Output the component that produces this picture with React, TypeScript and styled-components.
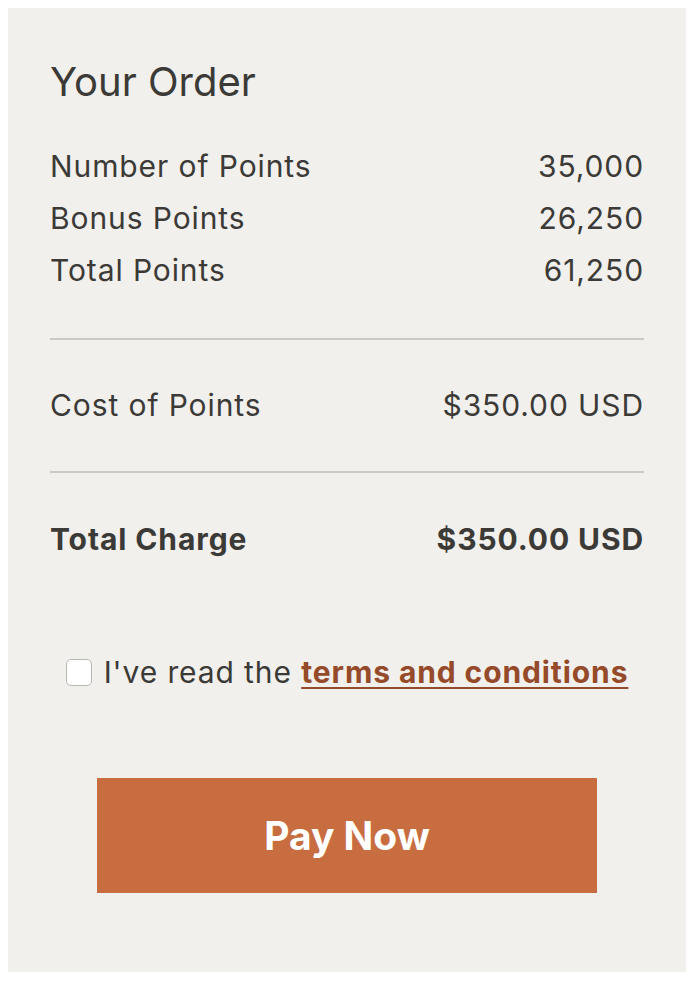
import styled, { createGlobalStyle } from "styled-components";

const GlobalStyle = createGlobalStyle`
  body {
    margin: 8px;
    background: #ffffff;
    font-family: Inter, "Liberation Sans", sans-serif;
  }
`;

const Card = styled.div`
  width: 678px;
  box-sizing: border-box;
  background: #f2f0ec;
  padding: 50px 42px 79px;
  color: #3b3a37;
`;

const Title = styled.h2`
  margin: 0 0 34px;
  font-size: 40px;
  line-height: 48px;
  font-weight: 400;
`;

const Row = styled.div<{ $bold?: boolean }>`
  display: flex;
  justify-content: space-between;
  font-size: 30px;
  line-height: 52px;
  letter-spacing: 0.9px;
  font-weight: ${(p) => (p.$bold ? 700 : 400)};
`;

const Divider = styled.hr<{ $top: number }>`
  margin: ${(p) => p.$top}px 0 0;
  border: none;
  height: 2px;
  background: #cbc9c5;
`;

const Section = styled.div<{ $top: number }>`
  margin-top: ${(p) => p.$top}px;
`;

const Agree = styled.label`
  margin-top: 81px;
  display: flex;
  align-items: center;
  justify-content: center;
  gap: 12px;
  font-size: 30px;
  line-height: 52px;
  letter-spacing: 0.9px;
`;

const Box = styled.input`
  appearance: none;
  width: 26px;
  height: 27px;
  margin: 0;
  border: 1px solid #b9b7b3;
  border-radius: 5px;
  background: #ffffff;
`;

const Terms = styled.a`
  color: #954a29;
  font-weight: 700;
  text-decoration: underline;
  text-underline-offset: 4px;
  text-decoration-thickness: 2px;
`;

const PayButton = styled.button`
  display: block;
  margin: 80px auto 0;
  width: 500px;
  height: 115px;
  border: none;
  background: #c86d40;
  color: #ffffff;
  font-family: inherit;
  font-size: 39px;
  font-weight: 700;
`;

const points = [
  ["Number of Points", "35,000"],
  ["Bonus Points", "26,250"],
  ["Total Points", "61,250"],
];

export default function App() {
  return (
    <>
      <GlobalStyle />
      <Card>
        <Title>Your Order</Title>
        {points.map(([label, value]) => (
          <Row key={label}>
            <span>{label}</span>
            <span>{value}</span>
          </Row>
        ))}
        <Divider $top={42} />
        <Section $top={39}>
          <Row>
            <span>Cost of Points</span>
            <span>$350.00 USD</span>
          </Row>
        </Section>
        <Divider $top={40} />
        <Section $top={40}>
          <Row $bold>
            <span>Total Charge</span>
            <span>$350.00 USD</span>
          </Row>
        </Section>
        <Agree>
          <Box type="checkbox" />
          <span>
            I've read the <Terms href="#">terms and conditions</Terms>
          </span>
        </Agree>
        <PayButton>Pay Now</PayButton>
      </Card>
    </>
  );
}
